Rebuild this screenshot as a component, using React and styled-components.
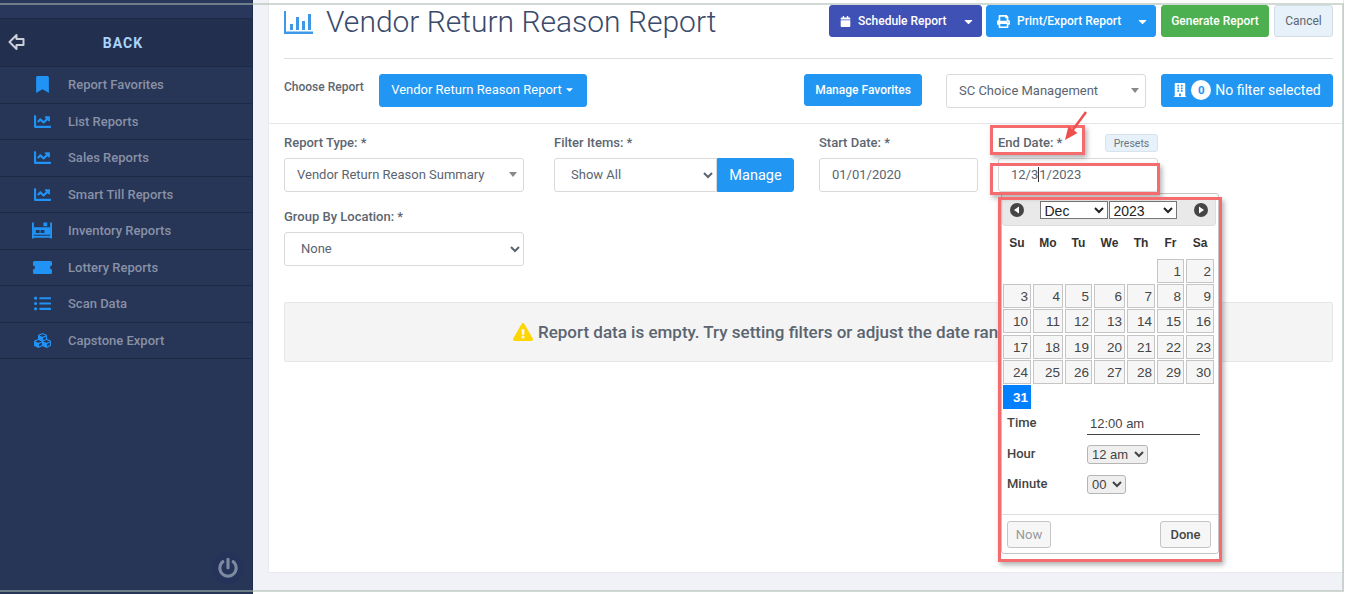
import React from "react";
import styled, { createGlobalStyle } from "styled-components";
import {
  FaBookmark, FaChartLine, FaListUl, FaCubes, FaPowerOff,
  FaCalendar, FaPrint, FaBuilding, FaExclamationTriangle, FaCaretDown,
} from "react-icons/fa";

const Global = createGlobalStyle`
  html, body { margin: 0; padding: 0; background: #fff; overflow: hidden; }
  * { box-sizing: border-box; }
  body { font-family: Roboto, "Liberation Sans", sans-serif; }
`;

const Page = styled.div`
  position: relative;
  width: 1349px;
  height: 594px;
  display: flex;
  overflow: hidden;
`;
const Frame = styled.div`
  position: absolute;
  left: 0;
  top: 3px;
  width: 1344px;
  height: 589px;
  border: 2px solid rgba(170, 185, 175, 0.55);
  border-left: none;
  pointer-events: none;
`;

/* sidebar */
const Sidebar = styled.aside`
  width: 253px;
  height: 594px;
  flex-shrink: 0;
  background: #273556;
  position: relative;
  border-right: 1px solid #1f2c4b;
`;
const SideTop = styled.div`
  height: 19px;
  background: #28375b;
  border-bottom: 1px solid #1d2945;
`;
const BackRow = styled.div`
  height: 48px;
  background: #222f4f;
  display: flex;
  align-items: center;
  justify-content: center;
  padding-right: 6px;
  color: #a9d3fb;
  font-size: 14px;
  font-weight: 700;
  letter-spacing: 1px;
  position: relative;
  border-bottom: 1px solid #1d2945;
`;
const BackIcon = styled.svg`
  position: absolute;
  left: 8px;
  top: 14px;
  width: 17px;
  height: 18px;
`;
const SideItem = styled.div`
  height: 36.5px;
  display: flex;
  align-items: center;
  border-bottom: 1px solid #1d2945;
  color: #8891a6;
  font-size: 13px;
  font-weight: 500;
`;
const SideIcon = styled.span`
  width: 68px;
  padding: 0 16px 0 32px;
  display: flex;
  justify-content: center;
  flex-shrink: 0;
  color: #2093f5;
  font-size: 17px;
  svg { display: block; }
`;
const PowerBtn = styled.div`
  position: absolute;
  left: 212px;
  top: 552px;
  width: 32px;
  height: 32px;
  border-radius: 50%;
  display: flex;
  align-items: center;
  justify-content: center;
  color: #7d899f;
  font-size: 20px;
  background: #25335a;
`;

/* main */
const Main = styled.main`
  width: 1091px;
  height: 591px;
  background: #f1f2f7;
  padding-left: 15px;
`;
const Card = styled.div`
  position: relative;
  height: 573px;
  background: #fff;
  border: 1px solid #e9e9ee;
  border-top: none;
`;
const Head = styled.div`
  padding: 0 10px 0 15px;
  border-bottom: 1px solid #e6e6e6;
`;
const TitleRow = styled.div`
  height: 59px;
  border-bottom: 1px solid #dedede;
  display: flex;
  justify-content: space-between;
  align-items: flex-start;
`;
const Title = styled.h1`
  margin: 0;
  display: flex;
  align-items: center;
  font-size: 30px;
  font-weight: 300;
  line-height: 44px;
  color: #3a4a6b;
  svg { margin-right: 13px; }
`;
const Actions = styled.div`
  display: flex;
  margin-top: 5px;
  gap: 5px;
`;
const Button = styled.button`
  height: ${p => p.$h || 32}px;
  padding: 0 ${p => p.$px || 12}px ${p => p.$pb || 0}px;
  border: 1px solid ${p => p.$bg};
  border-radius: 3px;
  background: ${p => p.$bg};
  color: ${p => p.$color || "#fff"};
  font-family: inherit;
  font-size: ${p => p.$fs || 12}px;
  font-weight: ${p => p.$fw || 500};
  display: flex;
  align-items: center;
  justify-content: ${p => (p.$between ? "space-between" : "center")};
  width: ${p => (p.$w ? `${p.$w}px` : "auto")};
  margin-left: ${p => p.$ml || 0}px;
  flex-shrink: 0;
  white-space: nowrap;
  svg { flex-shrink: 0; }
`;
const BtnLead = styled.span`
  display: flex;
  align-items: center;
  gap: 7px;
  font-size: 12px;
`;
const BtnCaret = styled(FaCaretDown)`
  margin-right: -4px;
`;
const CancelButton = styled(Button)`
  border-color: #d3dde6;
  font-weight: 400;
`;
const Toolbar = styled.div`
  height: 64px;
  padding-top: 15px;
  display: flex;
  align-items: flex-start;
`;
const ChooseLabel = styled.span`
  width: 95px;
  font-size: 12px;
  font-weight: 500;
  color: #5c6670;
  line-height: 27px;
`;
const ToolRight = styled.div`
  margin-left: auto;
  display: flex;
  gap: 24px;
`;
const Select2 = styled.div`
  width: ${p => p.$w}px;
  height: 34px;
  border: 1px solid #d9d9d9;
  border-radius: 3px;
  background: #fff;
  color: #5a6470;
  font-size: 13px;
  padding: 0 12px 2px;
  display: flex;
  align-items: center;
  position: relative;
  &::after {
    content: "";
    position: absolute;
    right: 6px;
    top: 13px;
    border-left: 4px solid transparent;
    border-right: 4px solid transparent;
    border-top: 5px solid #888;
  }
`;
const FilterBtn = styled(Button)`
  margin-left: -9px;
  gap: 4px;
  font-size: 14px;
  font-weight: 400;
`;
const Badge = styled.span`
  width: 20px;
  height: 20px;
  flex-shrink: 0;
  border-radius: 50%;
  background: #fff;
  color: #2196f3;
  font-size: 11.5px;
  font-weight: 700;
  display: flex;
  align-items: center;
  justify-content: center;
`;

/* form */
const FormArea = styled.div`
  padding: 10px 10px 0 15px;
`;
const FieldRow = styled.div`
  display: flex;
  margin-bottom: 16px;
`;
const Field = styled.div`
  width: ${p => p.$w}px;
  margin-right: ${p => p.$mr || 0}px;
`;
const LabelRow = styled.div`
  height: 24px;
  display: flex;
  justify-content: space-between;
  align-items: flex-start;
`;
const Label = styled.label`
  font-size: 13px;
  font-weight: 500;
  color: #5c6670;
  line-height: 18px;
`;
const Presets = styled.span`
  width: 53px;
  height: 18px;
  background: #e7f1fa;
  border: 1px solid #d8e3ec;
  border-radius: 3px;
  color: #6c7781;
  font-size: 10.5px;
  display: flex;
  align-items: center;
  justify-content: center;
`;
const NativeSelect = styled.select`
  width: ${p => (p.$w ? `${p.$w}px` : "100%")};
  height: 34px;
  border: 1px solid #d9d9d9;
  border-radius: ${p => (p.$joined ? "3px 0 0 3px" : "3px")};
  background: #fff;
  color: #5a6470;
  font-family: inherit;
  font-size: 13px;
  padding: 0 12px 2px;
  flex-shrink: 0;
`;
const InputGroup = styled.div`
  display: flex;
`;
const ManageBtn = styled(Button)`
  border-radius: 0 3px 3px 0;
  font-size: 14.5px;
  font-weight: 400;
  padding: 0;
`;
const TextBox = styled.div`
  height: 34px;
  border: 1px solid #d9d9d9;
  border-radius: 3px;
  background: #fff;
  color: #5a6470;
  font-size: 13px;
  padding: 0 12px 2px;
  display: flex;
  align-items: center;
`;
const Caret = styled.span`
  display: inline-block;
  width: 1px;
  height: 15px;
  background: #333;
`;
const EmptyBox = styled.div`
  margin-top: 36px;
  height: 60px;
  background: #f4f4f4;
  border: 1px solid #e6e6e6;
  border-radius: 2px;
  display: flex;
  align-items: center;
  padding-left: 228px;
  gap: 5px;
  color: #5b6570;
  font-size: 17px;
  font-weight: 500;
  white-space: nowrap;
  svg { color: #fdd500; font-size: 20px; flex-shrink: 0; }
`;

/* date picker overlay */
const Picker = styled.div`
  position: absolute;
  left: 732px;
  top: 193px;
  width: 218px;
  height: 361px;
  background: #fff;
  border: 1px solid #c5c5c5;
  border-radius: 3px;
  padding: 4px 3px 0 1px;
  font-family: "Liberation Sans", Arial, sans-serif;
  color: #333;
`;
const PickerHead = styled.div`
  height: 28px;
  margin: 0 -1px;
  background: #e9e9e9;
  border: 1px solid #dddddd;
  border-radius: 3px;
  display: flex;
  align-items: center;
  justify-content: space-between;
  padding: 0 7px 4px;
`;
const HeadSelects = styled.div`
  display: flex;
  gap: 1px;
  margin-right: 2px;
`;
const MonthSelect = styled.select`
  width: ${p => p.$w}px;
  height: 18px;
  font-family: inherit;
  font-size: 14px;
  border: 1px solid #767676;
  border-radius: 0;
  background: #fff;
  color: #222;
  padding: 0;
`;
const Nav = styled.svg`
  width: 14px;
  height: 14px;
`;
const DaysGrid = styled.div`
  display: grid;
  grid-template-columns: 28px 30px 27px 31px 28px 27px 28px;
  grid-auto-rows: 24px;
  column-gap: 2px;
  row-gap: 1.2px;
`;
const WeekRow = styled(DaysGrid)`
  grid-auto-rows: 33px;
`;
const Weekday = styled.span`
  font-weight: 700;
  font-size: 12px;
  display: flex;
  align-items: center;
  justify-content: center;
  color: #333;
`;
const Day = styled.span`
  border: 1px solid ${p => (p.$on ? "#007fff" : "#c5c5c5")};
  background: ${p => (p.$on ? "#007fff" : "#f6f6f6")};
  color: ${p => (p.$on ? "#fff" : "#454545")};
  font-weight: ${p => (p.$on ? 700 : 400)};
  font-size: 13.5px;
  text-align: right;
  padding: 3px 2px 0 0;
  line-height: 17px;
`;
const Blank = styled.span``;
const TimeGrid = styled.div`
  margin-top: 2px;
  padding-left: 4px;
`;
const TimeRow = styled.div`
  height: ${p => p.$h}px;
  display: flex;
  align-items: flex-start;
  padding-top: 4px;
`;
const TimeLabel = styled.span`
  width: 80px;
  font-size: 13px;
  font-family: Roboto, sans-serif;
  font-weight: 500;
  color: #444;
`;
const TimeValue = styled.span`
  width: 113px;
  height: 20px;
  border-bottom: 1px solid #444;
  font-size: 13px;
  padding: 1px 0 0 3px;
  color: #444;
`;
const SmallSelect = styled.select`
  width: ${p => p.$w}px;
  height: 19px;
  margin-top: -1px;
  font-family: inherit;
  font-size: 13px;
  border: 1px solid #b5b5b5;
  border-radius: 3px;
  background: #efefef;
  color: #444;
  padding: 0;
`;
const PickerFoot = styled.div`
  margin: 13px -3px 0 -1px;
  border-top: 1px solid #dddddd;
  padding: 6px 7px 0 5px;
  display: flex;
  justify-content: space-between;
`;
const PickBtn = styled.button`
  height: 27px;
  width: ${p => p.$w}px;
  border: 1px solid #c5c5c5;
  border-radius: 3px;
  background: #f6f6f6;
  font-family: Roboto, sans-serif;
  font-size: 13px;
  font-weight: ${p => (p.$muted ? 400 : 500)};
  color: ${p => (p.$muted ? "#999" : "#454545")};
  padding: 0;
`;

/* red callouts drawn on the screenshot */
const Callout = styled.div`
  position: absolute;
  left: ${p => p.$x}px;
  top: ${p => p.$y}px;
  width: ${p => p.$w}px;
  height: ${p => p.$h}px;
  border: 3px solid #f56c6e;
  box-shadow: 2px 3px 5px rgba(0, 0, 0, 0.3);
  pointer-events: none;
`;
const ArrowMark = styled.svg`
  position: absolute;
  left: 784px;
  top: 108px;
  width: 40px;
  height: 36px;
  overflow: visible;
`;

const sideItems = [
  ["Report Favorites", <FaBookmark key="a" />],
  ["List Reports", <FaChartLine key="b" />],
  ["Sales Reports", <FaChartLine key="c" />],
  ["Smart Till Reports", <FaChartLine key="d" />],
  ["Inventory Reports", (
    <svg key="e" width="21" height="17" viewBox="0 0 21 17" fill="currentColor">
      <path d="M0 0h2v17H0zM19 0h2v17h-2zM2 14h17v2H2zM12 0h4v4h-4z" />
      <path fillRule="evenodd" d="M2 5h17v8H2zM4 8v3h4V8zM9 8v3h4V8z" />
    </svg>
  )],
  ["Lottery Reports", (
    <svg key="f" width="19" height="13" viewBox="0 0 19 13" fill="currentColor">
      <path d="M1.5 0h16A1.5 1.5 0 0 1 19 1.5V4.5a2 2 0 0 0 0 4V11.5A1.5 1.5 0 0 1 17.5 13h-16A1.5 1.5 0 0 1 0 11.5V8.5a2 2 0 0 0 0-4V1.5A1.5 1.5 0 0 1 1.5 0z" />
    </svg>
  )],
  ["Scan Data", <FaListUl key="g" />],
  ["Capstone Export", <FaCubes key="h" />],
];

const week = ["Su", "Mo", "Tu", "We", "Th", "Fr", "Sa"];
const days = Array.from({ length: 31 }, (_, i) => i + 1);

const PrevNext = ({ flip }) => (
  <Nav viewBox="0 0 14 14">
    <circle cx="7" cy="7" r="7" fill="#454545" />
    <path d={flip ? "M5 3.5 L10 7 L5 10.5Z" : "M9 3.5 L4 7 L9 10.5Z"} fill="#fff" />
  </Nav>
);

export default function App() {
  return (
    <Page>
      <Global />
      <Sidebar>
        <SideTop />
        <BackRow>
          <BackIcon viewBox="0 0 17 18">
            <path d="M1.5 9 L8.5 2 V6 H15.5 V12 H8.5 V16Z" fill="none" stroke="#c9ced8" strokeWidth="2" strokeLinejoin="round" />
          </BackIcon>
          BACK
        </BackRow>
        {sideItems.map(([name, icon]) => (
          <SideItem key={name}>
            <SideIcon>{icon}</SideIcon>
            {name}
          </SideItem>
        ))}
        <PowerBtn><FaPowerOff /></PowerBtn>
      </Sidebar>

      <Main>
        <Card>
          <Head>
            <TitleRow>
              <Title>
                <svg width="29" height="23" viewBox="0 0 29 23" fill="#3f97e8">
                  <path d="M0 0h2v20.5h27V23H0z" />
                  <path d="M6 13h3v6H6zM12 6h3v13h-3zM18 10h3v9h-3zM24 3h3v16h-3z" />
                </svg>
                Vendor Return Reason Report
              </Title>
              <Actions>
                <Button $bg="#3f51b5" $w={153} $between $px={10}>
                  <BtnLead><FaCalendar size={11} />Schedule Report</BtnLead>
                  <BtnCaret size={13} />
                </Button>
                <Button $bg="#2196f3" $w={170} $ml={-1} $between $px={10}>
                  <BtnLead><FaPrint size={13} />Print/Export Report</BtnLead>
                  <BtnCaret size={13} />
                </Button>
                <Button $bg="#4caf50" $w={108}>Generate Report</Button>
                <CancelButton $bg="#e7f1fa" $color="#5c6670" $w={59}>Cancel</CancelButton>
              </Actions>
            </TitleRow>
            <Toolbar>
              <ChooseLabel>Choose Report</ChooseLabel>
              <Button $bg="#2196f3" $h={33} $w={208} $fs={13} $fw={400} $pb={2}>
                Vendor Return Reason Report
                <FaCaretDown size={11} style={{ marginLeft: 2 }} />
              </Button>
              <ToolRight>
                <Button $bg="#2196f3" $w={118}>Manage Favorites</Button>
                <Select2 $w={200}>SC Choice Management</Select2>
                <FilterBtn $bg="#2196f3" $h={33} $w={172} $px={0} $pb={1}>
                  <FaBuilding size={14} />
                  <Badge>0</Badge>
                  No filter selected
                </FilterBtn>
              </ToolRight>
            </Toolbar>
          </Head>

          <FormArea>
            <FieldRow>
              <Field $w={240} $mr={30}>
                <LabelRow><Label>Report Type: *</Label></LabelRow>
                <Select2 $w={240}>Vendor Return Reason Summary</Select2>
              </Field>
              <Field $w={240} $mr={25}>
                <LabelRow><Label>Filter Items: *</Label></LabelRow>
                <InputGroup>
                  <NativeSelect $w={163} $joined defaultValue="all">
                    <option value="all">Show All</option>
                  </NativeSelect>
                  <ManageBtn $bg="#2196f3" $h={34} $w={77}>Manage</ManageBtn>
                </InputGroup>
              </Field>
              <Field $w={159} $mr={20}>
                <LabelRow><Label>Start Date: *</Label></LabelRow>
                <TextBox>01/01/2020</TextBox>
              </Field>
              <Field $w={160}>
                <LabelRow><Label>End Date: *</Label><Presets>Presets</Presets></LabelRow>
                <TextBox>12/3<Caret />1/2023</TextBox>
              </Field>
            </FieldRow>
            <Field $w={240}>
              <LabelRow><Label>Group By Location: *</Label></LabelRow>
              <NativeSelect defaultValue="none">
                <option value="none">None</option>
              </NativeSelect>
            </Field>
            <EmptyBox>
              <FaExclamationTriangle />
              Report data is empty. Try setting filters or adjust the date range.
            </EmptyBox>
          </FormArea>

          <Picker>
            <PickerHead>
              <PrevNext />
              <HeadSelects>
                <MonthSelect $w={68} defaultValue="Dec"><option>Dec</option></MonthSelect>
                <MonthSelect $w={68} defaultValue="2023"><option>2023</option></MonthSelect>
              </HeadSelects>
              <PrevNext flip />
            </PickerHead>
            <WeekRow>
              {week.map(d => <Weekday key={d}>{d}</Weekday>)}
            </WeekRow>
            <DaysGrid>
              {[0, 1, 2, 3, 4].map(i => <Blank key={i} />)}
              {days.map(d => <Day key={d} $on={d === 31}>{d}</Day>)}
            </DaysGrid>
            <TimeGrid>
              <TimeRow $h={31}>
                <TimeLabel>Time</TimeLabel>
                <TimeValue>12:00 am</TimeValue>
              </TimeRow>
              <TimeRow $h={30}>
                <TimeLabel>Hour</TimeLabel>
                <SmallSelect $w={61} defaultValue="12 am"><option>12 am</option></SmallSelect>
              </TimeRow>
              <TimeRow $h={29}>
                <TimeLabel>Minute</TimeLabel>
                <SmallSelect $w={39} defaultValue="00"><option>00</option></SmallSelect>
              </TimeRow>
            </TimeGrid>
            <PickerFoot>
              <PickBtn $w={44} $muted>Now</PickBtn>
              <PickBtn $w={51}>Done</PickBtn>
            </PickerFoot>
          </Picker>

          <Callout $x={721} $y={125} $w={95} $h={30} />
          <Callout $x={721} $y={163} $w={170} $h={32} />
          <Callout $x={729} $y={197} $w={224} $h={365} />
          <ArrowMark viewBox="0 0 40 36">
            <path d="M33 4 L19 23" stroke="#ee4f4f" strokeWidth="2.5" fill="none" />
            <path d="M12 32 L15.5 18 L24.5 25Z" fill="#ee4f4f" />
          </ArrowMark>
        </Card>
      </Main>
      <Frame />
    </Page>
  );
}
